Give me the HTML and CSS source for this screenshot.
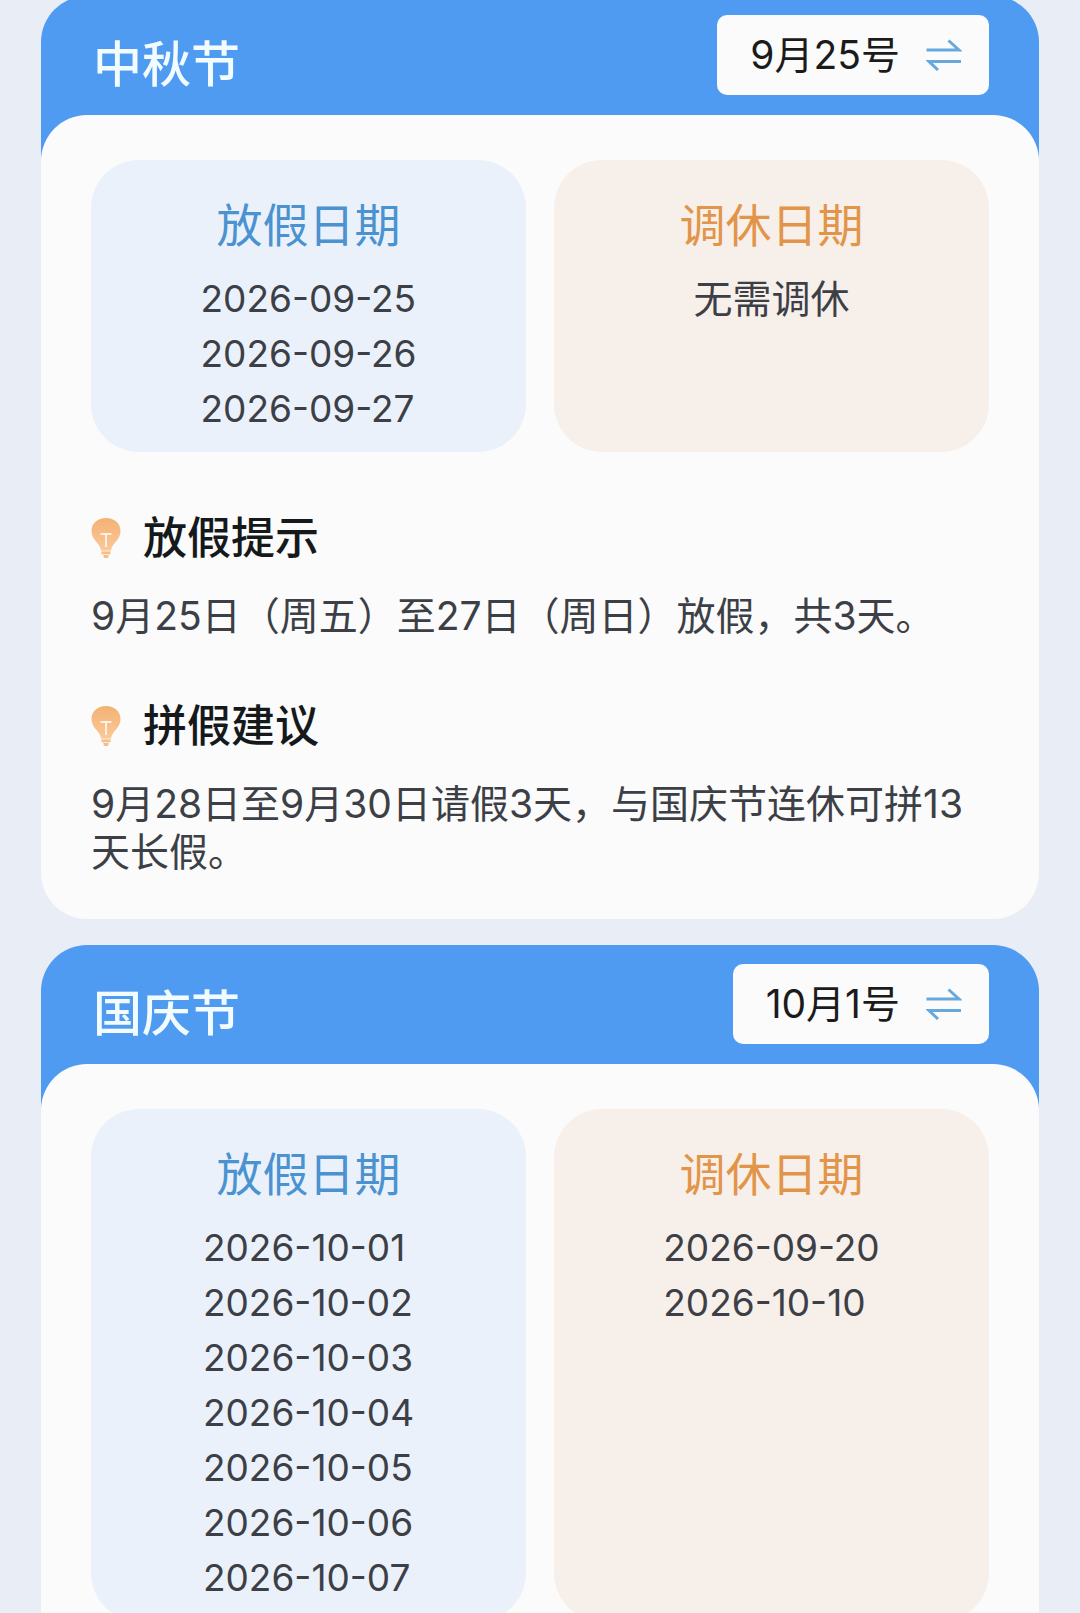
FILE: index.html
```
<!DOCTYPE html>
<html lang="zh-CN">
<head>
    <meta charset="UTF-8">
    <meta name="viewport" content="width=device-width, initial-scale=1.0">
    <title>放假安排</title>
    <link rel="stylesheet" href="styles.css">
</head>
<body>
    <!-- Shared icons -->
    <svg class="sprite" aria-hidden="true">
        <defs>
            <linearGradient id="bulbFill" x1="0" y1="0" x2="0" y2="1">
                <stop offset="0" stop-color="#f3b274"/>
                <stop offset="1" stop-color="#fbc898"/>
            </linearGradient>
        </defs>
        <symbol id="swap" viewBox="0 0 36 32">
            <path d="M0.5 11H33L22.500 1.500M35 22.500H3L12 31" fill="none" stroke="#68a9dd" stroke-width="3"/>
        </symbol>
        <symbol id="bulb" viewBox="0 0 30 40">
            <path d="M15 0C6.500 0 .5 5.500 .5 13c0 4.500 2 7.500 4.500 10.500 2.500 3 4.500 5 5 9h10c.5-4 2.500-6 5-9 2.500-3 4.500-6 4.500-10.500C29.500 5.500 23.500 0 15 0z" fill="url(#bulbFill)"/>
            <path d="M10.500 32.500h9v4h-1.500L17 40h-4l-1-3.500h-1.500z" fill="#f5bf8a"/>
            <path d="M10.500 33h9M11 36.500h8" stroke="#fdebd8" stroke-width="1"/>
            <path d="M9.500 16h11M15 16V29" fill="none" stroke="#fff1e2" stroke-width="2"/>
        </symbol>
    </svg>

    <main class="page">
        <section class="card">
            <header class="card-header">
                <h2 class="card-title">中秋节</h2>
                <button class="date-button" type="button">
                    9月25号
                    <svg class="swap-icon" aria-hidden="true"><use href="#swap"/></svg>
                </button>
            </header>
            <div class="card-body">
                <div class="panels">
                    <div class="panel rest">
                        <h3 class="panel-title">放假日期</h3>
                        <ul class="dates">
                            <li>2026-09-25</li>
                            <li>2026-09-26</li>
                            <li>2026-09-27</li>
                        </ul>
                    </div>
                    <div class="panel work">
                        <h3 class="panel-title">调休日期</h3>
                        <p class="no-dates">无需调休</p>
                    </div>
                </div>
                <div class="tip">
                    <h3 class="tip-title">
                        <svg class="bulb-icon" aria-hidden="true"><use href="#bulb"/></svg>
                        放假提示
                    </h3>
                    <p class="tip-text">9月25日（周五）至27日（周日）放假，共3天。</p>
                </div>
                <div class="tip">
                    <h3 class="tip-title">
                        <svg class="bulb-icon" aria-hidden="true"><use href="#bulb"/></svg>
                        拼假建议
                    </h3>
                    <p class="tip-text">9月28日至9月30日请假3天，与国庆节连休可拼13天长假。</p>
                </div>
            </div>
        </section>

        <section class="card">
            <header class="card-header">
                <h2 class="card-title">国庆节</h2>
                <button class="date-button" type="button">
                    10月1号
                    <svg class="swap-icon" aria-hidden="true"><use href="#swap"/></svg>
                </button>
            </header>
            <div class="card-body">
                <div class="panels">
                    <div class="panel rest">
                        <h3 class="panel-title">放假日期</h3>
                        <ul class="dates">
                            <li>2026-10-01</li>
                            <li>2026-10-02</li>
                            <li>2026-10-03</li>
                            <li>2026-10-04</li>
                            <li>2026-10-05</li>
                            <li>2026-10-06</li>
                            <li>2026-10-07</li>
                        </ul>
                    </div>
                    <div class="panel work">
                        <h3 class="panel-title">调休日期</h3>
                        <ul class="dates">
                            <li>2026-09-20</li>
                            <li>2026-10-10</li>
                        </ul>
                    </div>
                </div>
            </div>
        </section>
    </main>
</body>
</html>
```
FILE: styles.css
```
* {
    box-sizing: border-box;
}

body {
    margin: 0;
    font-family: Inter, "Noto Sans CJK SC", sans-serif;
    font-size: 39px;
    color: #3c4046;
    background-color: #e9edf6;
}

h2,
h3,
p,
ul {
    margin: 0;
    padding: 0;
}

.sprite {
    position: absolute;
    width: 0;
    height: 0;
}

.page {
    display: flex;
    flex-direction: column;
    gap: 26px;
    height: 100vh;
    padding: 0 41px;
    overflow: hidden;
}

.card {
    flex-shrink: 0;
}

.card:first-child {
    margin-top: -4px;
}

/* The header runs on under the rounded top of the card body */
.card-header {
    display: flex;
    justify-content: space-between;
    align-items: flex-start;
    padding: 19px 50px 66px 52px;
    border-radius: 46px 46px 0 0;
    background-color: #4f9bf1;
}

.card-title {
    font-size: 49px;
    font-weight: 500;
    line-height: 100px;
    color: #f2fcff;
}

.date-button {
    display: flex;
    align-items: center;
    gap: 26px;
    height: 80px;
    padding: 0 27px 0 33px;
    border: none;
    border-radius: 10px;
    font-family: inherit;
    font-size: 39px;
    line-height: 48px;
    color: #1b1b1b;
    background-color: #fbfbfb;
    cursor: pointer;
}

.swap-icon {
    width: 36px;
    height: 32px;
}

.card-body {
    margin-top: -66px;
    padding: 45px 50px 43px;
    border-radius: 46px;
    background-color: #fafbfa;
}

.panels {
    display: flex;
    gap: 28px;
}

.panel {
    flex: 1;
    padding: 33px 0 16px;
    border-radius: 48px;
}

.panel.rest {
    background-color: #eaf1fa;
}

.panel.work {
    background-color: #f7efea;
}

.panel-title {
    margin-bottom: 14px;
    font-size: 46px;
    font-weight: 400;
    line-height: 64px;
    text-align: center;
}

.rest .panel-title {
    color: #4a92d0;
}

.work .panel-title {
    color: #e29549;
}

.dates {
    width: fit-content;
    margin: 0 auto;
    font-size: 37px;
    line-height: 55px;
    list-style: none;
}

.no-dates {
    line-height: 55px;
    text-align: center;
}

.tip {
    margin-top: 62px;
}

.tip-title {
    display: flex;
    align-items: center;
    gap: 22px;
    margin-bottom: 30px;
    font-size: 44px;
    font-weight: 500;
    line-height: 48px;
    color: #16191c;
}

.bulb-icon {
    width: 30px;
    height: 40px;
}

.tip-text {
    line-height: 48px;
}
```
